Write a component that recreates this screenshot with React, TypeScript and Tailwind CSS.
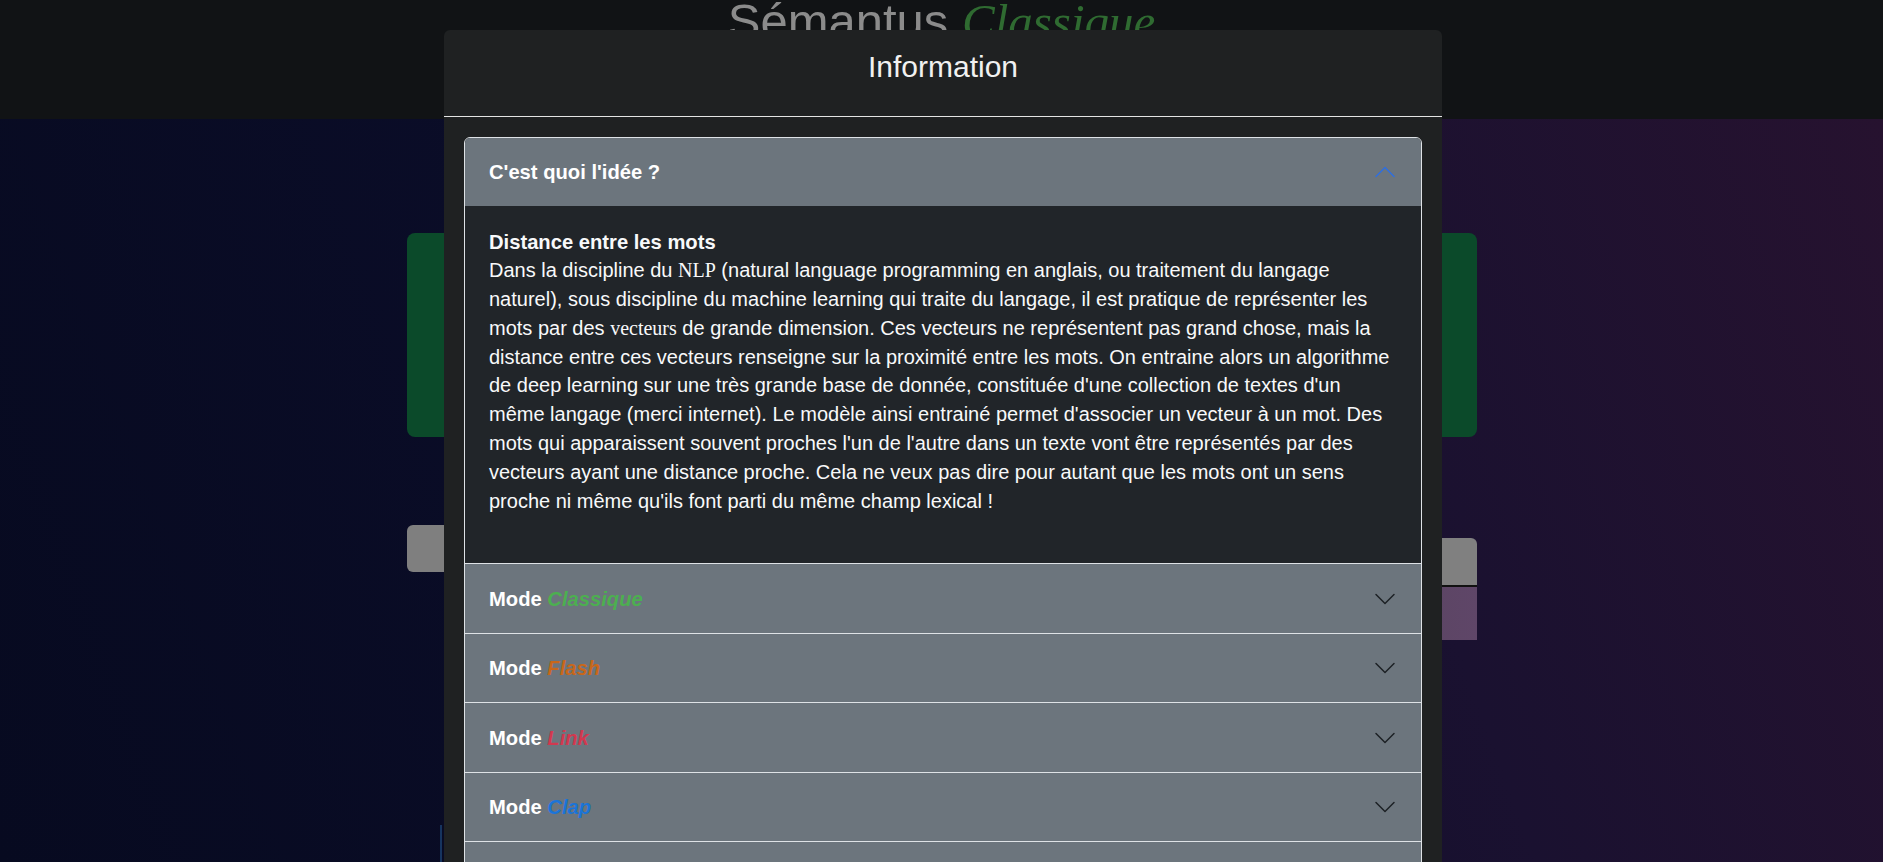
import React from 'react';

type ModeItem = {
  label: string;
  color: string;
};

const modes: ModeItem[] = [
  { label: 'Classique', color: 'text-[#4caf50]' },
  { label: 'Flash', color: 'text-[#c8671a]' },
  { label: 'Link', color: 'text-[#d2384f]' },
  { label: 'Clap', color: 'text-[#1b74d8]' },
  { label: 'Duel', color: 'text-[#9c5fd1]' },
];

const Serif = ({ children }: { children: React.ReactNode }) => (
  <span className="font-['Liberation_Serif',serif]">{children}</span>
);

// lines as wrapped in the reference
const lines: React.ReactNode[] = [
  <>Dans la discipline du <Serif>NLP</Serif> (natural language programming en anglais, ou traitement du langage</>,
  <>naturel), sous discipline du machine learning qui traite du langage, il est pratique de représenter les</>,
  <>mots par des <Serif>vecteurs</Serif> de grande dimension. Ces vecteurs ne représentent pas grand chose, mais la</>,
  <>distance entre ces vecteurs renseigne sur la proximité entre les mots. On entraine alors un algorithme</>,
  <>de deep learning sur une très grande base de donnée, constituée d'une collection de textes d'un</>,
  <>même langage (merci internet). Le modèle ainsi entrainé permet d'associer un vecteur à un mot. Des</>,
  <>mots qui apparaissent souvent proches l'un de l'autre dans un texte vont être représentés par des</>,
  <>vecteurs ayant une distance proche. Cela ne veux pas dire pour autant que les mots ont un sens</>,
  <>proche ni même qu'ils font parti du même champ lexical !</>,
];

const Chevron = ({ open }: { open?: boolean }) => (
  <svg
    viewBox="0 0 16 16"
    className={`w-[24px] h-[24px] shrink-0 ${open ? 'rotate-180 fill-[#2f6fdf]' : 'fill-[#1d2125]'}`}
  >
    <path
      fillRule="evenodd"
      d="M1.646 4.646a.5.5 0 0 1 .708 0L8 10.293l5.646-5.647a.5.5 0 0 1 .708.708l-6 6a.5.5 0 0 1-.708 0l-6-6a.5.5 0 0 1 0-.708z"
    />
  </svg>
);

export default function App() {
  return (
    <div className="relative h-screen w-full overflow-hidden font-['Liberation_Sans',Arial,sans-serif] bg-[linear-gradient(70deg,#070a20_0%,#0b0d29_40%,#1a1130_70%,#27122f_100%)]">
      {/* Navbar with title (behind the modal) */}
      <header className="h-[119px] bg-[#111315] flex justify-center">
        <h1 className="-mt-[3px] text-[49px] leading-none whitespace-nowrap">
          <span className="text-[#8b8b8b]">Sémantus</span>{' '}
          <span className="font-['Liberation_Serif',serif] italic text-[#2f6b31]">Classique</span>
        </h1>
      </header>

      {/* Page content dimmed under the backdrop */}
      <main className="w-[1070px] mx-auto pt-[114px]">
        <div className="h-[204px] rounded-[8px] bg-[#0b4a2a]" />
        <div className="mt-[88px] flex justify-between">
          <div className="w-[420px] h-[47px] rounded-l-[6px] bg-[#7f7f7f]" />
          <div className="mt-[13px] w-[320px] flex flex-col">
            <div className="h-[49px] rounded-tr-[6px] bg-[#808080] border-b-2 border-[#111]" />
            <div className="h-[53px] bg-[linear-gradient(90deg,#4a4050,#5f4668)]" />
          </div>
        </div>
        <div className="mt-[185px] ml-[33px] w-[2px] h-[45px] bg-[#16345f]" />
      </main>

      {/* Modal */}
      <div className="absolute left-[444px] top-[30px] w-[998px] bg-[#1f2122] rounded-t-[6px]">
        <div className="h-[87px] border-b-[1.5px] border-[#e4e4e4] flex justify-center">
          <h5 className="pt-[20px] text-[30px] leading-[34px] text-[#f1f1f1]">Information</h5>
        </div>

        <div className="p-[20px]">
          <div className="border border-[#dee2e6] rounded-t-[6px] overflow-hidden">
            {/* Open item */}
            <button className="w-full h-[68px] flex items-center justify-between px-[24px] bg-[#6c757d] text-left">
              <span className="text-[20.2px] font-bold text-white">C'est quoi l'idée ?</span>
              <Chevron open />
            </button>
            <div className="bg-[#212529] pt-[21.5px] pb-[48px] px-[24px] text-[20px] leading-[28.8px] text-[#f8f9fa] whitespace-nowrap">
              <div className="font-bold text-[20.2px]">Distance entre les mots</div>
              {lines.map((l, i) => (
                <div key={i}>{l}</div>
              ))}
            </div>

            {/* Closed items */}
            {modes.map((m) => (
              <button
                key={m.label}
                className="w-full h-[69.5px] flex items-center justify-between px-[24px] bg-[#6c757d] border-t border-[#dee2e6] text-left"
              >
                <span className="text-[20.2px] font-bold text-white">
                  Mode <em className={m.color}>{m.label}</em>
                </span>
                <Chevron />
              </button>
            ))}
          </div>
        </div>
      </div>
    </div>
  );
}
